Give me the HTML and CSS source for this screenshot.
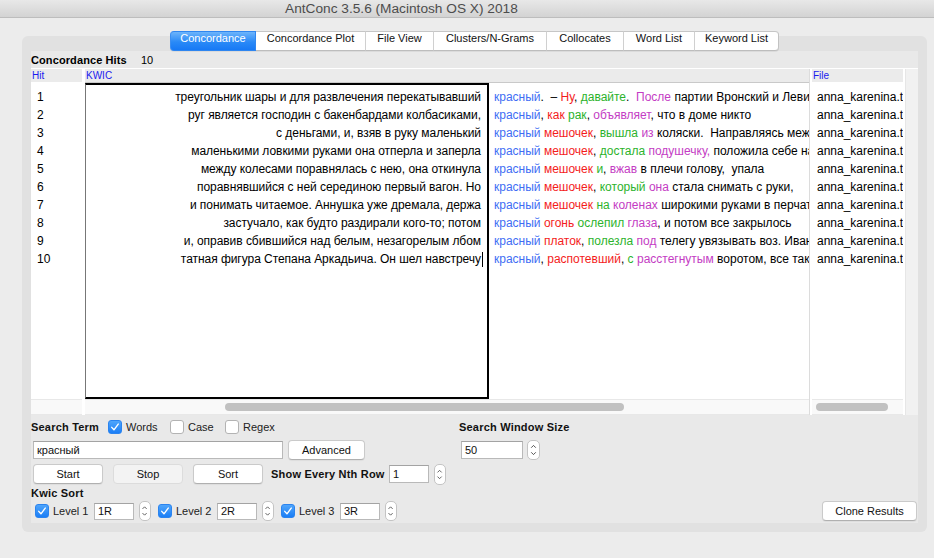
FILE: index.html
```html
<!DOCTYPE html>
<html>
<head>
<meta charset="utf-8">
<title>AntConc</title>
<link rel="stylesheet" href="styles.css">
</head>
<body>
<div class="titlebar"><span class="title">AntConc 3.5.6 (Macintosh OS X) 2018</span></div>

<div class="tabs">
  <div class="tab sel t1">Concordance</div>
  <div class="tab t2">Concordance Plot</div>
  <div class="tab t3">File View</div>
  <div class="tab t4">Clusters/N-Grams</div>
  <div class="tab t5">Collocates</div>
  <div class="tab t6">Word List</div>
  <div class="tab last t7">Keyword List</div>
</div>

<div class="panel">
  <div class="inner">
    <div class="hits"><span class="hits-label">Concordance Hits</span><span class="hits-num">10</span></div>

    <div class="table">
      <div class="pane hitpane">
        <div class="hdr">Hit</div>
        <div class="body">
          <div class="row">1</div>
          <div class="row">2</div>
          <div class="row">3</div>
          <div class="row">4</div>
          <div class="row">5</div>
          <div class="row">6</div>
          <div class="row">7</div>
          <div class="row">8</div>
          <div class="row">9</div>
          <div class="row">10</div>
        </div>
        <div class="hscroll"></div>
      </div>

      <div class="pane kwicpane">
        <div class="hdr">KWIC</div>
        <div class="kbody">
          <div class="leftbox">
            <div class="row">треугольник шары и для развлечения перекатывавший</div>
            <div class="row">руг является господин с бакенбардами колбасиками,</div>
            <div class="row">с деньгами, и, взяв в руку маленький</div>
            <div class="row">маленькими ловкими руками она отперла и заперла</div>
            <div class="row">между колесами поравнялась с нею, она откинула</div>
            <div class="row">поравнявшийся с ней серединою первый вагон. Но</div>
            <div class="row">и понимать читаемое. Аннушка уже дремала, держа</div>
            <div class="row">застучало, как будто раздирали кого-то; потом</div>
            <div class="row">и, оправив сбившийся над белым, незагорелым лбом</div>
            <div class="row">татная фигура Степана Аркадьича. Он шел навстречу<span class="caret"></span></div>
          </div>
          <div class="rightctx">
            <div class="row"><span class="b">красный</span>.  – <span class="r">Ну</span>, <span class="g">давайте</span>.  <span class="m">После</span> партии Вронский и Левин</div>
            <div class="row"><span class="b">красный</span>, <span class="r">как</span> <span class="g">рак</span>, <span class="m">объявляет</span>, что в доме никто</div>
            <div class="row"><span class="b">красный</span> <span class="r">мешочек</span>, <span class="g">вышла</span> <span class="m">из</span> коляски.  Направляясь межд</div>
            <div class="row"><span class="b">красный</span> <span class="r">мешочек</span>, <span class="g">достала</span> <span class="m">подушечку,</span> положила себе на</div>
            <div class="row"><span class="b">красный</span> <span class="r">мешочек</span> <span class="g">и</span>, <span class="m">вжав</span> в плечи голову,  упала</div>
            <div class="row"><span class="b">красный</span> <span class="r">мешочек</span>, <span class="g">который</span> <span class="m">она</span> стала снимать с руки,</div>
            <div class="row"><span class="b">красный</span> <span class="r">мешочек</span> <span class="g">на</span> <span class="m">коленах</span> широкими руками в перчат</div>
            <div class="row"><span class="b">красный</span> <span class="r">огонь</span> <span class="g">ослепил</span> <span class="m">глаза</span>, и потом все закрылось</div>
            <div class="row"><span class="b">красный</span> <span class="r">платок</span>, <span class="g">полезла</span> <span class="m">под</span> телегу увязывать воз. Иван</div>
            <div class="row"><span class="b">красный</span>, <span class="r">распотевший</span>, <span class="g">с</span> <span class="m">расстегнутым</span> воротом, все так</div>
          </div>
        </div>
        <div class="hscroll kscroll"><div class="thumb kthumb"></div></div>
      </div>

      <div class="pane filepane">
        <div class="hdr">File</div>
        <div class="body fbody">
          <div class="row"><span class="fname">anna_karenina.txt</span></div>
          <div class="row"><span class="fname">anna_karenina.txt</span></div>
          <div class="row"><span class="fname">anna_karenina.txt</span></div>
          <div class="row"><span class="fname">anna_karenina.txt</span></div>
          <div class="row"><span class="fname">anna_karenina.txt</span></div>
          <div class="row"><span class="fname">anna_karenina.txt</span></div>
          <div class="row"><span class="fname">anna_karenina.txt</span></div>
          <div class="row"><span class="fname">anna_karenina.txt</span></div>
          <div class="row"><span class="fname">anna_karenina.txt</span></div>
          <div class="row"><span class="fname">anna_karenina.txt</span></div>
        </div>
        <div class="hscroll fscroll"><div class="thumb fthumb"></div></div>
      </div>

      <div class="vscroll"></div>
    </div>

    <div class="controls">
      <div class="crow r1">
        <div class="cell">
          <span class="blabel st-label">Search Term</span>
          <span class="chk w-words"><span class="cb on"><svg viewBox="0 0 14 14" width="14" height="14"><path d="M3.2 7.4 L5.8 10.3 L10.8 3.6" fill="none" stroke="#fff" stroke-width="1.6" stroke-linecap="round" stroke-linejoin="round"/></svg></span><span class="clabel">Words</span></span>
          <span class="chk w-case"><span class="cb"></span><span class="clabel">Case</span></span>
          <span class="chk"><span class="cb"></span><span class="clabel">Regex</span></span>
        </div>
        <div class="cell"><span class="blabel">Search Window Size</span></div>
      </div>

      <div class="crow r2">
        <div class="cell">
          <div class="tf search">красный</div>
          <div class="btn adv">Advanced</div>
        </div>
        <div class="cell">
          <div class="tf win">50</div>
          <div class="step win-step"><svg viewBox="0 0 12 18" width="11" height="18"><path d="M3.5 6.5 L6 4 L8.5 6.5 M3.5 11.5 L6 14 L8.5 11.5" fill="none" stroke="#444" stroke-width="1"/></svg></div>
        </div>
      </div>

      <div class="crow r3">
        <div class="cell">
          <div class="btn act start">Start</div>
          <div class="btn act stop">Stop</div>
          <div class="btn act sort">Sort</div>
          <span class="blabel nth-label">Show Every Nth Row</span>
          <div class="tf nth">1</div>
          <div class="step nth-step"><svg viewBox="0 0 12 19" width="10" height="19"><path d="M3 7 L5.5 4.5 L8 7 M3 12 L5.5 14.5 L8 12" fill="none" stroke="#444" stroke-width="1"/></svg></div>
        </div>
        <div class="cell"></div>
      </div>

      <div class="crow r4">
        <div class="cell"><span class="blabel">Kwic Sort</span></div>
        <div class="cell"></div>
      </div>

      <div class="crow r5">
        <div class="cell">
          <div class="lvl">
            <span class="cb on"><svg viewBox="0 0 14 14" width="14" height="14"><path d="M3.2 7.4 L5.8 10.3 L10.8 3.6" fill="none" stroke="#fff" stroke-width="1.6" stroke-linecap="round" stroke-linejoin="round"/></svg></span>
            <span class="lvl-label">Level 1</span>
            <div class="tf lvl-tf">1R</div>
            <div class="step lvl-step"><svg viewBox="0 0 12 18" width="10" height="18"><path d="M3 6.5 L5.5 4 L8 6.5 M3 11.5 L5.5 14 L8 11.5" fill="none" stroke="#444" stroke-width="1"/></svg></div>
          </div>
          <div class="lvl">
            <span class="cb on"><svg viewBox="0 0 14 14" width="14" height="14"><path d="M3.2 7.4 L5.8 10.3 L10.8 3.6" fill="none" stroke="#fff" stroke-width="1.6" stroke-linecap="round" stroke-linejoin="round"/></svg></span>
            <span class="lvl-label">Level 2</span>
            <div class="tf lvl-tf">2R</div>
            <div class="step lvl-step"><svg viewBox="0 0 12 18" width="10" height="18"><path d="M3 6.5 L5.5 4 L8 6.5 M3 11.5 L5.5 14 L8 11.5" fill="none" stroke="#444" stroke-width="1"/></svg></div>
          </div>
          <div class="lvl">
            <span class="cb on"><svg viewBox="0 0 14 14" width="14" height="14"><path d="M3.2 7.4 L5.8 10.3 L10.8 3.6" fill="none" stroke="#fff" stroke-width="1.6" stroke-linecap="round" stroke-linejoin="round"/></svg></span>
            <span class="lvl-label">Level 3</span>
            <div class="tf lvl-tf">3R</div>
            <div class="step lvl-step"><svg viewBox="0 0 12 18" width="10" height="18"><path d="M3 6.5 L5.5 4 L8 6.5 M3 11.5 L5.5 14 L8 11.5" fill="none" stroke="#444" stroke-width="1"/></svg></div>
          </div>
        </div>
        <div class="cell clone-cell">
          <div class="btn clone">Clone Results</div>
        </div>
      </div>
    </div>
  </div>
</div>
</body>
</html>
```

FILE: styles.css
```css
* { box-sizing: border-box; margin: 0; padding: 0; }

body {
  width: 934px;
  height: 558px;
  overflow: hidden;
  background: #ececec;
  font-family: "Liberation Sans", Arial, sans-serif;
  color: #000;
}

/* title bar */
.titlebar {
  height: 18px;
  background: linear-gradient(#e8e8e8, #d3d3d3);
  border-bottom: 1px solid #bdbdbd;
  padding-left: 285px;
  font-size: 13.7px;
  line-height: 17px;
  color: #4d4d4d;
}

/* tabs */
.tabs {
  display: flex;
  margin: 13px 0 0 170px;
  height: 20px;
  width: 609px;
  position: relative;
  z-index: 1;
}
.tab {
  height: 20px;
  background: #fff;
  border-top: 1px solid #c6c6c6;
  border-bottom: 1px solid #bdbdbd;
  border-right: 1px solid #d0d0d0;
  font-size: 11px;
  line-height: 12px;
  text-align: center;
  color: #111;
  box-shadow: 0 1px 0 rgba(0,0,0,0.06);
}
.tab.sel {
  background: linear-gradient(#6db4fb, #2a8af7 55%, #1779f5);
  border-color: #2f86f0;
  border-left: 1px solid #3b8ef2;
  border-radius: 4px 0 0 4px;
  color: #fff;
}
.tab.last { border-right: 1px solid #c2c2c2; border-radius: 0 4px 4px 0; }
.t1 { width: 86px; }
.t2 { width: 110px; }
.t3 { width: 68px; }
.t4 { width: 113px; }
.t5 { width: 77px; }
.t6 { width: 71px; }
.t7 { width: 84px; }

/* tab panel */
.panel {
  margin: -15px 0 0 22px;
  width: 905px;
  height: 496px;
  background: #e1e1e1;
  border-radius: 6px;
  padding: 15px 9px 9px 9px;
}
.inner {
  height: 472px;
  background: #e9e9e9;
}

.hits {
  height: 17px;
  display: flex;
  align-items: center;
  font-size: 11px;
}
.hits-label { font-weight: bold; width: 110px; letter-spacing: 0.1px; }

/* table */
.table {
  height: 347px;
  display: flex;
  background: #fff;
  padding-top: 1px;
}
.pane { display: flex; flex-direction: column; background: #fff; }
.hitpane { width: 51px; }
.kwicpane { width: 725px; margin-left: 3px; border-right: 1px solid #dcdcdc; }
.filepane { width: 91px; margin-left: 2px; }
.vscroll {
  width: 13px;
  margin-left: 2px;
  background: #f1f1f1;
  border-left: 1px solid #e6e6e6;
}

.hdr {
  height: 13px;
  background: #ebebeb;
  color: #1a1aef;
  font-size: 10px;
  line-height: 13px;
  padding-left: 1px;
  margin-bottom: 1px;
}
.kwicpane .hdr { margin-bottom: 0; border-bottom: 1px solid #c9c9c9; height: 14px; }

.row {
  height: 18px;
  font-size: 12px;
  line-height: 18px;
  white-space: pre;
  overflow: hidden;
}

.body { height: 316px; padding-top: 5px; }
.hitpane .row { padding-left: 6px; }
.fbody .row { padding-left: 5px; }
.fname { display: block; width: 86px; overflow: hidden; }

.kbody { height: 316px; display: flex; }
.leftbox {
  width: 404px;
  height: 316px;
  border: 2px solid #000;
  border-left: 1px solid #777;
  padding-top: 3px;
}
.leftbox .row { text-align: right; padding-right: 6px; letter-spacing: -0.05px; }
.caret {
  display: inline-block;
  width: 1px;
  height: 15px;
  background: #000;
  vertical-align: -4px;
  margin-left: 1px;
  margin-right: -2px;
}
.rightctx { flex: 1; overflow: hidden; padding-top: 5px; }
.rightctx .row { padding-left: 5px; }

.b { color: #3e6ef4; }
.r { color: #f41c1c; }
.g { color: #2cb32c; }
.m { color: #c43cc4; }

.hscroll {
  height: 16px;
  background: #f9f9f9;
  border-top: 1px solid #e8e8e8;
  border-bottom: 1px solid #e8e8e8;
  display: flex;
  align-items: center;
}
.kscroll { padding-left: 140px; }
.fscroll { padding-left: 4px; }
.thumb { height: 8px; border-radius: 4px; background: #c1c1c1; }
.kthumb { width: 399px; }
.fthumb { width: 72px; }

/* controls */
.controls { height: 108px; padding-top: 3px; font-size: 11px; }
.crow { display: grid; grid-template-columns: 428px 1fr; align-items: center; }
.r1 { height: 18px; }
.r2 { height: 22px; margin-top: 3px; }
.r3 { height: 22px; margin-top: 2px; }
.r4 { height: 14px; margin-top: 1px; }
.r5 { height: 20px; margin-top: 1px; }
.cell { display: flex; align-items: center; height: 100%; }

.blabel { font-weight: bold; color: #111; letter-spacing: 0.2px; white-space: nowrap; }
.st-label { width: 77px; }
.nth-label { width: 118px; margin-left: 8px; }

.chk { display: flex; align-items: center; }
.w-words { width: 62px; }
.w-case { width: 55px; }
.clabel { margin-left: 4px; color: #222; }

.cb {
  width: 14px;
  height: 14px;
  border: 1px solid #b3b3b3;
  border-radius: 3px;
  background: #fff;
  display: flex;
  align-items: center;
  justify-content: center;
  flex: none;
}
.cb.on {
  background: linear-gradient(#4fa5fb, #1b7ef6);
  border-color: #2b84ef;
}
.cb svg { display: block; }

.tf {
  height: 18px;
  background: #fff;
  border: 1px solid #b9b9b9;
  border-top-color: #a3a3a3;
  padding-left: 3px;
  line-height: 16px;
  font-size: 11px;
  color: #111;
  white-space: nowrap;
}
.search { width: 250px; margin-left: 2px; }
.win { width: 62px; margin-left: 2px; }
.nth { width: 40px; }
.lvl-tf { width: 40px; height: 17px; line-height: 15px; }

.btn {
  height: 20px;
  background: #fff;
  border: 1px solid #cacaca;
  border-bottom-color: #b0b0b0;
  border-radius: 4px;
  text-align: center;
  line-height: 18px;
  font-size: 11px;
  color: #111;
  box-shadow: 0 1px 1px rgba(0,0,0,0.05);
}
.adv { width: 77px; margin-left: 5px; }
.act { width: 70px; }
.start { margin-left: 2px; }
.stop { margin-left: 10px; background: #f3f3f3; border-color: #dcdcdc; box-shadow: none; }
.sort { margin-left: 10px; }
.clone-cell { justify-content: flex-end; padding-right: 1px; }
.clone { width: 95px; }

.step {
  height: 20px;
  width: 13px;
  background: #fff;
  border: 1px solid #c4c4c4;
  border-radius: 5px;
  display: flex;
  align-items: center;
  justify-content: center;
  flex: none;
}
.step svg { display: block; }
.win-step { margin-left: 4px; }
.nth-step { margin-left: 5px; width: 12px; height: 21px; }
.lvl-step { margin-left: 5px; width: 12px; }

.lvl { display: flex; align-items: center; width: 116px; margin-left: 7px; }
.lvl:first-child { margin-left: 4px; }
.lvl-label { width: 45px; padding-left: 4px; color: #222; }
```
